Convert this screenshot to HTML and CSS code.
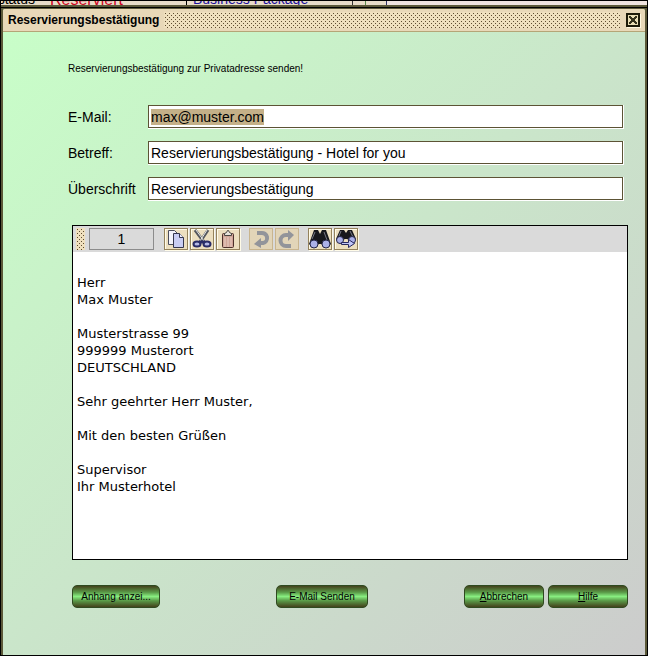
FILE: index.html
```html
<!DOCTYPE html>
<html lang="de">
<head>
  <meta charset="UTF-8">
  <meta name="viewport" content="width=device-width, initial-scale=1.0">
  <title>Reservierungsbestätigung</title>
  <link rel="stylesheet" href="styles.css">
</head>
<body>
  <!-- Fenster hinter dem Dialog -->
  <div class="hintergrund">
    <span class="zelle status">status</span>
    <span class="zelle reserviert">Reserviert</span>
    <span class="zelle paket">Business Package</span>
    <span class="zelle marke"></span>
    <span class="zelle rest"></span>
  </div>

  <main class="dialog">
    <header class="titelleiste">
      <h1>Reservierungsbestätigung</h1>
      <div class="raster"></div>
      <button class="schliessen" type="button" aria-label="Schließen">
        <svg width="14" height="14" viewBox="0 0 14 14" shape-rendering="crispEdges">
          <rect x="1" y="1" width="12" height="12" fill="#e8ddb4" stroke="#1c1a08" stroke-width="2"/>
          <path d="M3 3h2v1h1v1h2V4h1V3h2v2h-1v1H9v2h1v1h1v2H9v-1H8V9H6v1H5v1H3V9h1V8h1V6H4V5H3z" fill="#35321c"/>
        </svg>
      </button>
    </header>

    <form class="inhalt">
      <p class="hinweis">Reservierungsbestätigung zur Privatadresse senden!</p>

      <div class="felder">
        <label for="email">E-Mail:</label>
        <div class="feld"><input type="text" id="email" value="max@muster.com"></div>
        <label for="betreff">Betreff:</label>
        <div class="feld"><input type="text" id="betreff" value="Reservierungsbestätigung - Hotel for you"></div>
        <label for="ueberschrift">Überschrift</label>
        <div class="feld"><input type="text" id="ueberschrift" value="Reservierungsbestätigung"></div>
      </div>

      <div class="editor">
        <div class="werkzeuge">
          <div class="griff"></div>
          <input class="seite" type="text" value="1" aria-label="Seite">
          <div class="gruppe">
            <button class="werkzeug" type="button" aria-label="Kopieren">
              <svg width="22" height="20" viewBox="0 0 22 20">
                <path d="M3.500 1.500h6l3 3v11h-9z" fill="#f3f3fb" stroke="#4b4d5c"/>
                <path d="M8.500 4.500h6l4 4v10h-10z" fill="#c9cdf3" stroke="#34364d"/>
                <path d="M14.500 4.500v4h4" fill="#eeeefb" stroke="#34364d"/>
              </svg>
            </button>
            <button class="werkzeug" type="button" aria-label="Ausschneiden">
              <svg width="22" height="20" viewBox="0 0 22 20">
                <path d="M4 1l9 12M17 1L9 13" stroke="#55575e" stroke-width="3"/>
                <path d="M5 1l8 11M16 1L9 12" stroke="#e6e7e6" stroke-width="1"/>
                <ellipse cx="6" cy="15" rx="3.500" ry="2.500" fill="#b3b8e6" stroke="#292c67" stroke-width="2"/>
                <ellipse cx="16" cy="15" rx="3.500" ry="2.500" fill="#b3b8e6" stroke="#292c67" stroke-width="2"/>
                <path d="M8 13h6" stroke="#292c67" stroke-width="3"/>
              </svg>
            </button>
            <button class="werkzeug" type="button" aria-label="Einfügen">
              <svg width="22" height="20" viewBox="0 0 22 20">
                <rect x="5.500" y="4.500" width="11" height="14" rx="1" fill="#d0a598" stroke="#4c302b"/>
                <path d="M8 8v10M11 8v10M14 8v10" stroke="#ead0c5"/>
                <path d="M7.500 6.500v-2l2-1 1-2h1l1 2 2 1v2z" fill="#e7e3dc" stroke="#4a4540"/>
              </svg>
            </button>
          </div>
          <div class="gruppe">
            <button class="werkzeug" type="button" aria-label="Rückgängig" disabled>
              <svg width="22" height="20" viewBox="0 0 22 20">
                <path d="M7 4h4a5 5 0 0 1 2 10h-3" fill="none" stroke="#92949a" stroke-width="4"/>
                <path d="M11 9v10l-7-4z" fill="#92949a"/>
              </svg>
            </button>
            <button class="werkzeug" type="button" aria-label="Wiederholen" disabled>
              <svg width="22" height="20" viewBox="0 0 22 20">
                <path d="M13 6h-3a5 5 0 0 0 0 11h5" fill="none" stroke="#92949a" stroke-width="4"/>
                <path d="M12 1v11l6-6z" fill="#92949a"/>
              </svg>
            </button>
          </div>
          <div class="gruppe">
            <button class="werkzeug" type="button" aria-label="Suchen">
              <svg width="22" height="20" viewBox="0 0 22 20">
                <path d="M5 1h4l2 4 2-4h4l5 14-4 3-6-3h-2l-6 3-4-3z" fill="#17171c"/>
                <path d="M6 3L3 10M15 3l3 8" stroke="#777986"/>
                <circle cx="5" cy="15" r="4" fill="#abb0e8" stroke="#25264a"/>
                <circle cx="17" cy="15" r="4" fill="#abb0e8" stroke="#25264a"/>
              </svg>
            </button>
            <button class="werkzeug" type="button" aria-label="Weitersuchen">
              <svg width="22" height="20" viewBox="0 0 22 20">
                <path d="M5 1h4l2 3 2-3h4l4 9-3 3-6-3h-2l-6 3-3-3z" fill="#17171c"/>
                <path d="M6 2L4 7M15 2l3 6" stroke="#777986"/>
                <circle cx="5" cy="11" r="3.500" fill="#abb0e8" stroke="#25264a"/>
                <circle cx="17" cy="11" r="3.500" fill="#abb0e8" stroke="#25264a"/>
                <path d="M6.500 13.500h7v-3l6 4-6 4v-3h-7z" fill="#c0c5f7" stroke="#27295f"/>
              </svg>
            </button>
          </div>
        </div>
        <textarea class="text" rows="17" aria-label="Nachricht" spellcheck="false">

Herr
Max Muster

Musterstrasse 99
999999 Musterort
DEUTSCHLAND

Sehr geehrter Herr Muster,

Mit den besten Grüßen

Supervisor
Ihr Musterhotel</textarea>
      </div>

      <footer class="aktionen">
        <button class="btn anhang" type="button">Anhang anzei...</button>
        <button class="btn senden" type="button">E-Mail Senden</button>
        <div class="rechts">
          <button class="btn" type="button"><u>A</u>bbrechen</button>
          <button class="btn" type="button"><u>H</u>ilfe</button>
        </div>
      </footer>
    </form>
  </main>
  <script>
    // Adresse beim Öffnen markieren
    const email = document.getElementById('email');
    email.focus();
    email.select();
  </script>
</body>
</html>
```

FILE: styles.css
```css
* {
  margin: 0;
  padding: 0;
  box-sizing: border-box;
}

body {
  display: flex;
  flex-direction: column;
  min-height: 100vh;
  border: 1px solid #000;
  background: #5b5838;
  color: #000;
  font-family: "Liberation Sans", Arial, sans-serif;
  font-size: 14px;
}

/* Hintergrundfenster */
.hintergrund {
  display: flex;
  height: 6px;
  border-bottom: 2px solid #5b5838;
  overflow: hidden;
  background: #e8dcc8;
  box-shadow: 0 1px #000;
}

.zelle {
  display: flex;
  align-items: flex-end;
  height: 4px;
  line-height: 12px;
  white-space: nowrap;
}

.status {
  justify-content: flex-end;
  width: 34px;
}

.reserviert {
  width: 151px;
  padding-left: 15px;
  font-size: 16px;
  line-height: 10px;
  color: #d00020;
}

.paket {
  width: 167px;
  padding-left: 6px;
  border-left: 1px solid #000;
  border-right: 1px solid #333;
  color: #1a0e9c;
}

.marke {
  width: 34px;
  border-right: 1px solid #333366;
  background: linear-gradient(#5a8a4a, #5a8a4a) 12px 0 / 1px 4px no-repeat;
}

.rest {
  flex: 1;
  background: #efe3df;
}

/* Dialog */
.dialog {
  display: flex;
  flex: 1;
  flex-direction: column;
  margin: 2px 2px 0;
  border-radius: 2px 2px 0 0;
  background: linear-gradient(135deg, #c8ffc8, #cccccc);
}

.titelleiste {
  display: flex;
  align-items: center;
  height: 23px;
  padding: 0 5px;
  border-bottom: 1px solid #b5a577;
  border-radius: 2px 2px 0 0;
  background: #e8d8b8;
}

.titelleiste h1 {
  font-size: 12px;
  line-height: 16px;
}

.raster {
  flex: 1;
  height: 16px;
  margin: 0 6px 0 5px;
}

/* Versetztes Punktmuster */
.raster,
.griff {
  background:
    linear-gradient(#5e4c30, #5e4c30) 0 0 / 1px 1px no-repeat,
    #efe0be;
  background-image:
    conic-gradient(from 90deg at 3px 3px, #5e4c30 90deg, transparent 0),
    conic-gradient(from 90deg at 3px 3px, #5e4c30 90deg, transparent 0);
  background-position: 0 0, 2px 2px;
  background-size: 4px 4px;
  background-repeat: repeat;
}

.schliessen {
  width: 14px;
  height: 14px;
  border: none;
  background: none;
  box-shadow: 1px 1px #fff8e0;
}

.schliessen svg {
  display: block;
}

.inhalt {
  padding: 30px 17px 47px 65px;
}

.hinweis {
  font-size: 10px;
  line-height: 14px;
}

.felder {
  display: grid;
  grid-template-columns: 80px 1fr;
  row-gap: 12px;
  align-items: center;
  margin: 29px 4px 0 0;
}

.felder label {
  line-height: 24px;
}

.feld {
  height: 24px;
  border-right: 1px solid #fff;
  border-bottom: 1px solid #fff;
}

.feld input {
  display: block;
  width: 100%;
  height: 23px;
  padding: 0 2px;
  border: 1px solid #5c5335;
  background: #fff;
  font: inherit;
  line-height: 20px;
  outline: none;
}

.feld input::selection {
  background: #c4b088;
  color: #000;
}

/* Editor */
.editor {
  margin: 24px 0 0 4px;
  border: 1px solid #000;
  background: #fff;
}

.werkzeuge {
  display: flex;
  align-items: center;
  height: 26px;
  padding-left: 3px;
  background: #dadada;
}

.griff {
  width: 9px;
  height: 22px;
}

.seite {
  width: 65px;
  height: 22px;
  margin: 0 1px 0 4px;
  border: 1px solid #8c8c8c;
  background: #dadada;
  font: inherit;
  text-align: center;
}

.gruppe {
  display: flex;
  gap: 2px;
  margin-left: 9px;
}

.werkzeug {
  display: flex;
  justify-content: center;
  align-items: center;
  width: 24px;
  height: 22px;
  border: 1px solid #94825c;
  background: #ecdfc0;
  box-shadow: inset 1px 1px #fffbe8, 1px 1px #fffbe8;
}

.werkzeug:disabled {
  border-color: #c9b58e;
  background: #e2d5b8;
  box-shadow: none;
}

.text {
  display: block;
  width: 100%;
  padding: 5px 4px 13px;
  border: none;
  outline: none;
  background: #fff;
  color: #000;
  font: 13px/17px "DejaVu Sans", Verdana, sans-serif;
  resize: none;
}

/* Schaltflächen */
.aktionen {
  display: flex;
  margin: 25px 0 0 4px;
}

.btn {
  width: 80px;
  height: 23px;
  border: 1px solid #2f4a20;
  border-radius: 5px;
  background: linear-gradient(#44421c, #5a9a48 30%, #88ee80 50%, #5a9a48 70%, #44421c);
  color: #000;
  font-family: inherit;
  font-size: 10px;
  white-space: nowrap;
}

.anhang {
  width: 88px;
}

.senden {
  width: 92px;
  margin-left: 116px;
}

.rechts {
  display: flex;
  gap: 4px;
  margin-left: auto;
}
```
